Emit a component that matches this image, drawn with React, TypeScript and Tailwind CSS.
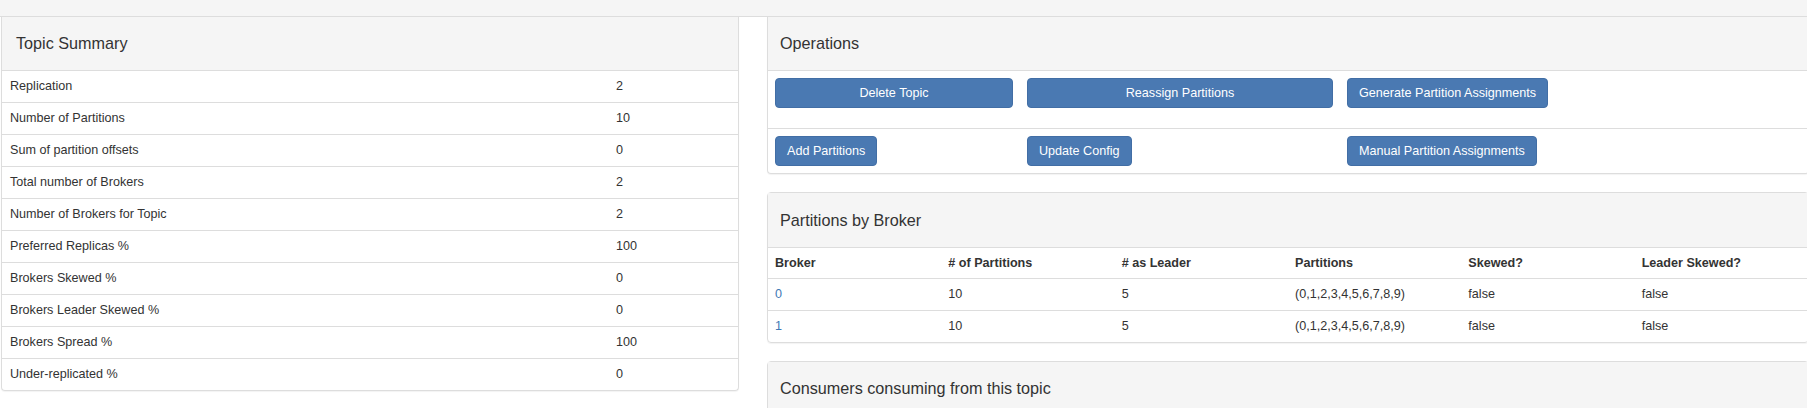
import React from 'react';

const summary: [string, string][] = [
  ['Replication', '2'],
  ['Number of Partitions', '10'],
  ['Sum of partition offsets', '0'],
  ['Total number of Brokers', '2'],
  ['Number of Brokers for Topic', '2'],
  ['Preferred Replicas %', '100'],
  ['Brokers Skewed %', '0'],
  ['Brokers Leader Skewed %', '0'],
  ['Brokers Spread %', '100'],
  ['Under-replicated %', '0'],
];

const brokers = [
  { id: '0', count: '10', leader: '5', parts: '(0,1,2,3,4,5,6,7,8,9)', skewed: 'false', leaderSkewed: 'false' },
  { id: '1', count: '10', leader: '5', parts: '(0,1,2,3,4,5,6,7,8,9)', skewed: 'false', leaderSkewed: 'false' },
];

const btn =
  'h-[30px] rounded-[4px] border border-[#426ea5] bg-[#4a79b2] px-[11px] text-white text-[12.6px] flex items-center justify-center';

// heights include the 1px bottom border (border-box)
const Heading: React.FC<{ title: string; h?: string; pl?: string }> = ({ title, h = 'h-[54px]', pl = 'pl-[14px]' }) => (
  <div className={`${h} ${pl} bg-[#f5f5f5] border-b border-[#ddd] flex items-center text-[16.2px] text-[#333]`}>
    {title}
  </div>
);

export default function App() {
  return (
    <div className="w-[1807px] h-[408px] overflow-hidden bg-white text-[#333] text-[12.6px] font-['Liberation_Sans',Arial,sans-serif]">
      <div className="h-[17px] bg-[#f5f5f5] border-b border-[#ddd]" />
      <div className="flex items-start">
        <div className="ml-px w-[738px] shrink-0 border-x border-b border-[#ddd] rounded-b-[4px] shadow-[0_1px_1px_rgba(0,0,0,0.05)]">
          <Heading title="Topic Summary" />
          {summary.map(([label, value], i) => {
            const last = i === summary.length - 1;
            return (
              <div
                key={label}
                className={`grid grid-cols-[606px_1fr] items-center ${last ? 'h-[31px]' : 'h-[32px] border-b border-[#ddd]'}`}
              >
                <div className="px-[8px]">{label}</div>
                <div className="px-[8px]">{value}</div>
              </div>
            );
          })}
        </div>

        <div className="ml-[28px] w-[1042px] shrink-0 flex flex-col gap-[18px]">
          <div className="border-x border-b border-[#ddd] rounded-b-[4px] shadow-[0_1px_1px_rgba(0,0,0,0.05)]">
            <Heading title="Operations" pl="pl-[12px]" />
            <div className="grid grid-cols-[252px_320px_1fr] h-[58px] border-b border-[#ddd] items-start pt-[7px]">
              <div className="px-[7px]">
                <button className={`${btn} w-full`}>Delete Topic</button>
              </div>
              <div className="px-[7px]">
                <button className={`${btn} w-full`}>Reassign Partitions</button>
              </div>
              <div className="px-[7px]">
                <button className={btn}>Generate Partition Assignments</button>
              </div>
            </div>
            <div className="grid grid-cols-[252px_320px_1fr] h-[44px] items-start pt-[7px]">
              <div className="px-[7px]">
                <button className={btn}>Add Partitions</button>
              </div>
              <div className="px-[7px]">
                <button className={btn}>Update Config</button>
              </div>
              <div className="px-[7px]">
                <button className={btn}>Manual Partition Assignments</button>
              </div>
            </div>
          </div>

          <div className="border border-[#ddd] rounded-[4px] shadow-[0_1px_1px_rgba(0,0,0,0.05)]">
            <Heading title="Partitions by Broker" h="h-[55px]" pl="pl-[12px]" />
            <div className="grid grid-cols-6 h-[31px] items-center border-b border-[#ddd] font-bold">
              {['Broker', '# of Partitions', '# as Leader', 'Partitions', 'Skewed?', 'Leader Skewed?'].map(t => (
                <div key={t} className="px-[7px]">{t}</div>
              ))}
            </div>
            {brokers.map((b, i) => (
              <div
                key={b.id}
                className={`grid grid-cols-6 items-center ${i === 0 ? 'h-[32px] border-b border-[#ddd]' : 'h-[31px]'}`}
              >
                <div className="px-[7px]">
                  <a className="text-[#3f78b5]">{b.id}</a>
                </div>
                <div className="px-[7px]">{b.count}</div>
                <div className="px-[7px]">{b.leader}</div>
                <div className="px-[7px]">{b.parts}</div>
                <div className="px-[7px]">{b.skewed}</div>
                <div className="px-[7px]">{b.leaderSkewed}</div>
              </div>
            ))}
          </div>

          <div className="border border-[#ddd] rounded-[4px]">
            <Heading title="Consumers consuming from this topic" pl="pl-[12px]" />
            <div className="h-[40px]" />
          </div>
        </div>
      </div>
    </div>
  );
}
